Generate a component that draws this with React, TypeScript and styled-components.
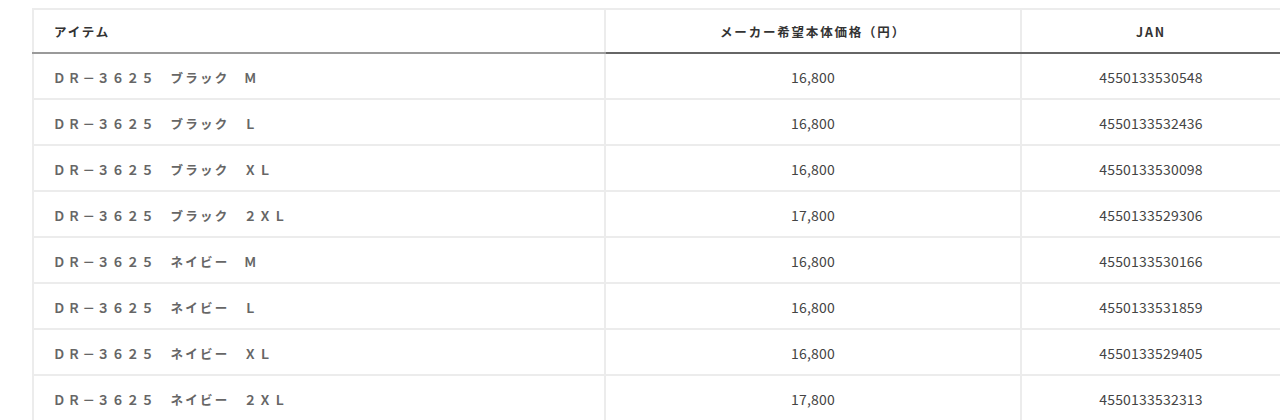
import React from 'react'
import styled, { createGlobalStyle } from 'styled-components'

const GlobalStyle = createGlobalStyle`
  body {
    margin: 0;
    background: #fff;
    font-family: "Noto Sans CJK JP", "Noto Sans", sans-serif;
  }
`

const Page = styled.div`
  padding: 8px 0 0 32px;
  overflow: hidden;
  width: 1280px;
  height: 420px;
  box-sizing: border-box;
`

const Table = styled.table`
  width: 1250px;
  border-collapse: collapse;
  table-layout: fixed;
  border: 2px solid #ececec;
`

const HeadCell = styled.th<{ align?: 'left' | 'center'; line: string }>`
  height: 41px;
  padding: 1px 0 0 ${({ align }) => (align === 'left' ? '20px' : '0')};
  text-align: ${({ align }) => align || 'center'};
  font-size: 12.5px;
  font-weight: 700;
  letter-spacing: 1.8px;
  color: #333;
  border-left: 2px solid #ececec;
  border-bottom: 2px solid ${({ line }) => line};
`

const Cell = styled.td<{ item?: boolean }>`
  height: 42px;
  padding: 2px 0 0 ${({ item }) => (item ? '19px' : '0')};
  text-align: ${({ item }) => (item ? 'left' : 'center')};
  font-size: ${({ item }) => (item ? '12.5px' : '14px')};
  font-weight: ${({ item }) => (item ? 700 : 400)};
  letter-spacing: ${({ item }) => (item ? '2.2px' : '0.2px')};
  color: ${({ item }) => (item ? '#666' : '#444')};
  border: 2px solid #ececec;
  white-space: nowrap;
`

const rows = [
  ['ＤＲ－３６２５　ブラック　Ｍ', '16,800', '4550133530548'],
  ['ＤＲ－３６２５　ブラック　Ｌ', '16,800', '4550133532436'],
  ['ＤＲ－３６２５　ブラック　ＸＬ', '16,800', '4550133530098'],
  ['ＤＲ－３６２５　ブラック　２ＸＬ', '17,800', '4550133529306'],
  ['ＤＲ－３６２５　ネイビー　Ｍ', '16,800', '4550133530166'],
  ['ＤＲ－３６２５　ネイビー　Ｌ', '16,800', '4550133531859'],
  ['ＤＲ－３６２５　ネイビー　ＸＬ', '16,800', '4550133529405'],
  ['ＤＲ－３６２５　ネイビー　２ＸＬ', '17,800', '4550133532313'],
]

export default function App() {
  return (
    <Page>
      <GlobalStyle />
      <Table>
        <colgroup>
          <col style={{ width: 572 }} />
          <col style={{ width: 416 }} />
          <col />
        </colgroup>
        <thead>
          <tr>
            <HeadCell align='left' line='#9a9a9a'>アイテム</HeadCell>
            <HeadCell line='#666'>メーカー希望本体価格（円）</HeadCell>
            <HeadCell line='#666'>JAN</HeadCell>
          </tr>
        </thead>
        <tbody>
          {rows.map(([item, price, jan]) => (
            <tr key={jan}>
              <Cell item>{item}</Cell>
              <Cell>{price}</Cell>
              <Cell>{jan}</Cell>
            </tr>
          ))}
        </tbody>
      </Table>
    </Page>
  )
}
